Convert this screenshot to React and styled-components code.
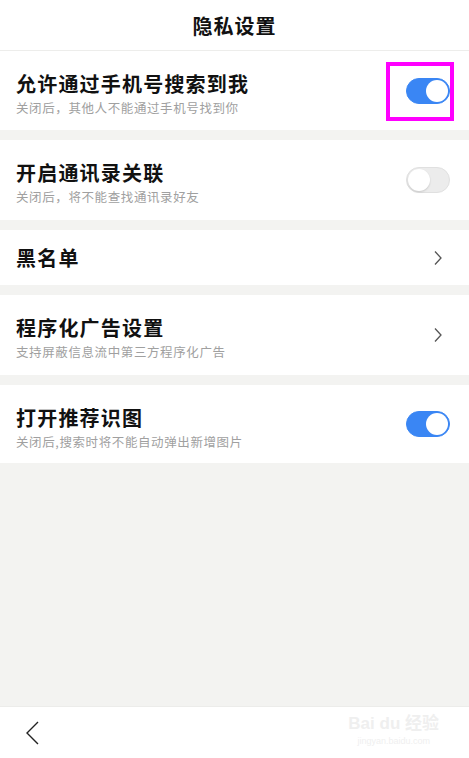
import styled, { createGlobalStyle } from "styled-components";

const GlobalStyle = createGlobalStyle`
    html, body {
        margin: 0;
        padding: 0;
        background: #f3f3f1;
    }
    * {
        box-sizing: border-box;
    }
    body {
        font-family: "Noto Sans CJK SC", "Noto Sans", sans-serif;
    }
`;

const Screen = styled.div`
    width: 469px;
    height: 758px;
    display: flex;
    flex-direction: column;
    background: #f3f3f1;
    overflow: hidden;
`;

const Header = styled.div`
    height: 51px;
    flex-shrink: 0;
    display: flex;
    align-items: center;
    justify-content: center;
    background: #fff;
    border-bottom: 1px solid #ededeb;
    font-size: 20px;
    font-weight: 700;
    color: #111;
    letter-spacing: 1px;
`;

const List = styled.div`
    display: flex;
    flex-direction: column;
    gap: 10px;
`;

const Row = styled.div`
    position: relative;
    height: ${({ $height }) => $height}px;
    padding: ${({ $sub }) => ($sub ? "20px 0 0" : "0")} 16px;
    padding-right: ${({ $chevron }) => ($chevron ? 26 : 19)}px;
    display: flex;
    align-items: ${({ $sub }) => ($sub ? "flex-start" : "center")};
    justify-content: space-between;
    background: #fff;
`;

const Texts = styled.div`
    display: flex;
    flex-direction: column;
    gap: 2px;
`;

const Title = styled.div`
    font-size: 20px;
    line-height: 26px;
    font-weight: 700;
    color: #111;
    letter-spacing: 1.2px;
`;

const Sub = styled.div`
    font-size: 12.5px;
    line-height: 18px;
    color: #a0a0a0;
    letter-spacing: 0.6px;
`;

const Side = styled.div`
    align-self: center;
    margin-top: ${({ $sub }) => ($sub ? -20 : 0)}px;
    display: flex;
    align-items: center;
`;

const Toggle = styled.div`
    position: relative;
    width: 44px;
    height: 26px;
    border-radius: 13px;
    background: ${({ $on }) => ($on ? "#3a86f4" : "#ececec")};
    border: 1px solid ${({ $on }) => ($on ? "#3a86f4" : "#e0e0e0")};

    &::after {
        content: "";
        position: absolute;
        top: 1px;
        left: ${({ $on }) => ($on ? 19 : 1)}px;
        width: 22px;
        height: 22px;
        border-radius: 50%;
        background: #fff;
        box-shadow: ${({ $on }) => ($on ? "none" : "0 1px 2px rgba(0,0,0,0.15)")};
    }
`;

const Highlight = styled.div`
    position: absolute;
    left: 386px;
    top: 11px;
    width: 68px;
    height: 59px;
    border: 4px solid #ff00ff;
`;

const Filler = styled.div`
    flex: 1;
`;

const BottomBar = styled.div`
    height: 52px;
    flex-shrink: 0;
    background: #fff;
    border-top: 1px solid #ececea;
    position: relative;
    display: flex;
    align-items: center;
    padding-left: 25px;
`;

const Watermark = styled.div`
    position: absolute;
    right: 30px;
    top: 8px;
    display: flex;
    flex-direction: column;
    align-items: center;
    color: #efefef;
    font-family: "Liberation Sans", "Noto Sans CJK SC", sans-serif;
    line-height: 1;
`;

const MarkBig = styled.div`
    font-size: 17px;
    font-weight: 700;
`;

const MarkSmall = styled.div`
    margin-top: 5px;
    font-size: 9px;
`;

const RowChevron = () => (
    <svg width="10" height="16" viewBox="0 0 10 16" fill="none">
        <path d="M2 1.5 L8 8 L2 14.5" stroke="#555" strokeWidth="1.3" />
    </svg>
);

const BackChevron = () => (
    <svg width="15" height="24" viewBox="0 0 15 24" fill="none">
        <path d="M13 1 L2 12 L13 23" stroke="#222" strokeWidth="1.4" />
    </svg>
);

const rows = [
    { title: "允许通过手机号搜索到我", sub: "关闭后，其他人不能通过手机号找到你", type: "on", mark: true, height: 79 },
    { title: "开启通讯录关联", sub: "关闭后，将不能查找通讯录好友", type: "off", height: 80 },
    { title: "黑名单", type: "chevron", height: 55 },
    { title: "程序化广告设置", sub: "支持屏蔽信息流中第三方程序化广告", type: "chevron", height: 80 },
    { title: "打开推荐识图", sub: "关闭后,搜索时将不能自动弹出新增图片", type: "on", height: 78 },
];

export default function App() {
    return (
        <>
            <GlobalStyle />
            <Screen>
                <Header>隐私设置</Header>
                <List>
                    {rows.map((r) => (
                        <Row
                            key={r.title}
                            $sub={!!r.sub}
                            $chevron={r.type === "chevron"}
                            $height={r.height}
                        >
                            <Texts>
                                <Title>{r.title}</Title>
                                {r.sub && <Sub>{r.sub}</Sub>}
                            </Texts>
                            <Side $sub={!!r.sub}>
                                {r.type === "chevron" ? <RowChevron /> : <Toggle $on={r.type === "on"} />}
                            </Side>
                            {r.mark && <Highlight />}
                        </Row>
                    ))}
                </List>
                <Filler />
                <BottomBar>
                    <BackChevron />
                    <Watermark>
                        <MarkBig>Bai du 经验</MarkBig>
                        <MarkSmall>jingyan.baidu.com</MarkSmall>
                    </Watermark>
                </BottomBar>
            </Screen>
        </>
    );
}
